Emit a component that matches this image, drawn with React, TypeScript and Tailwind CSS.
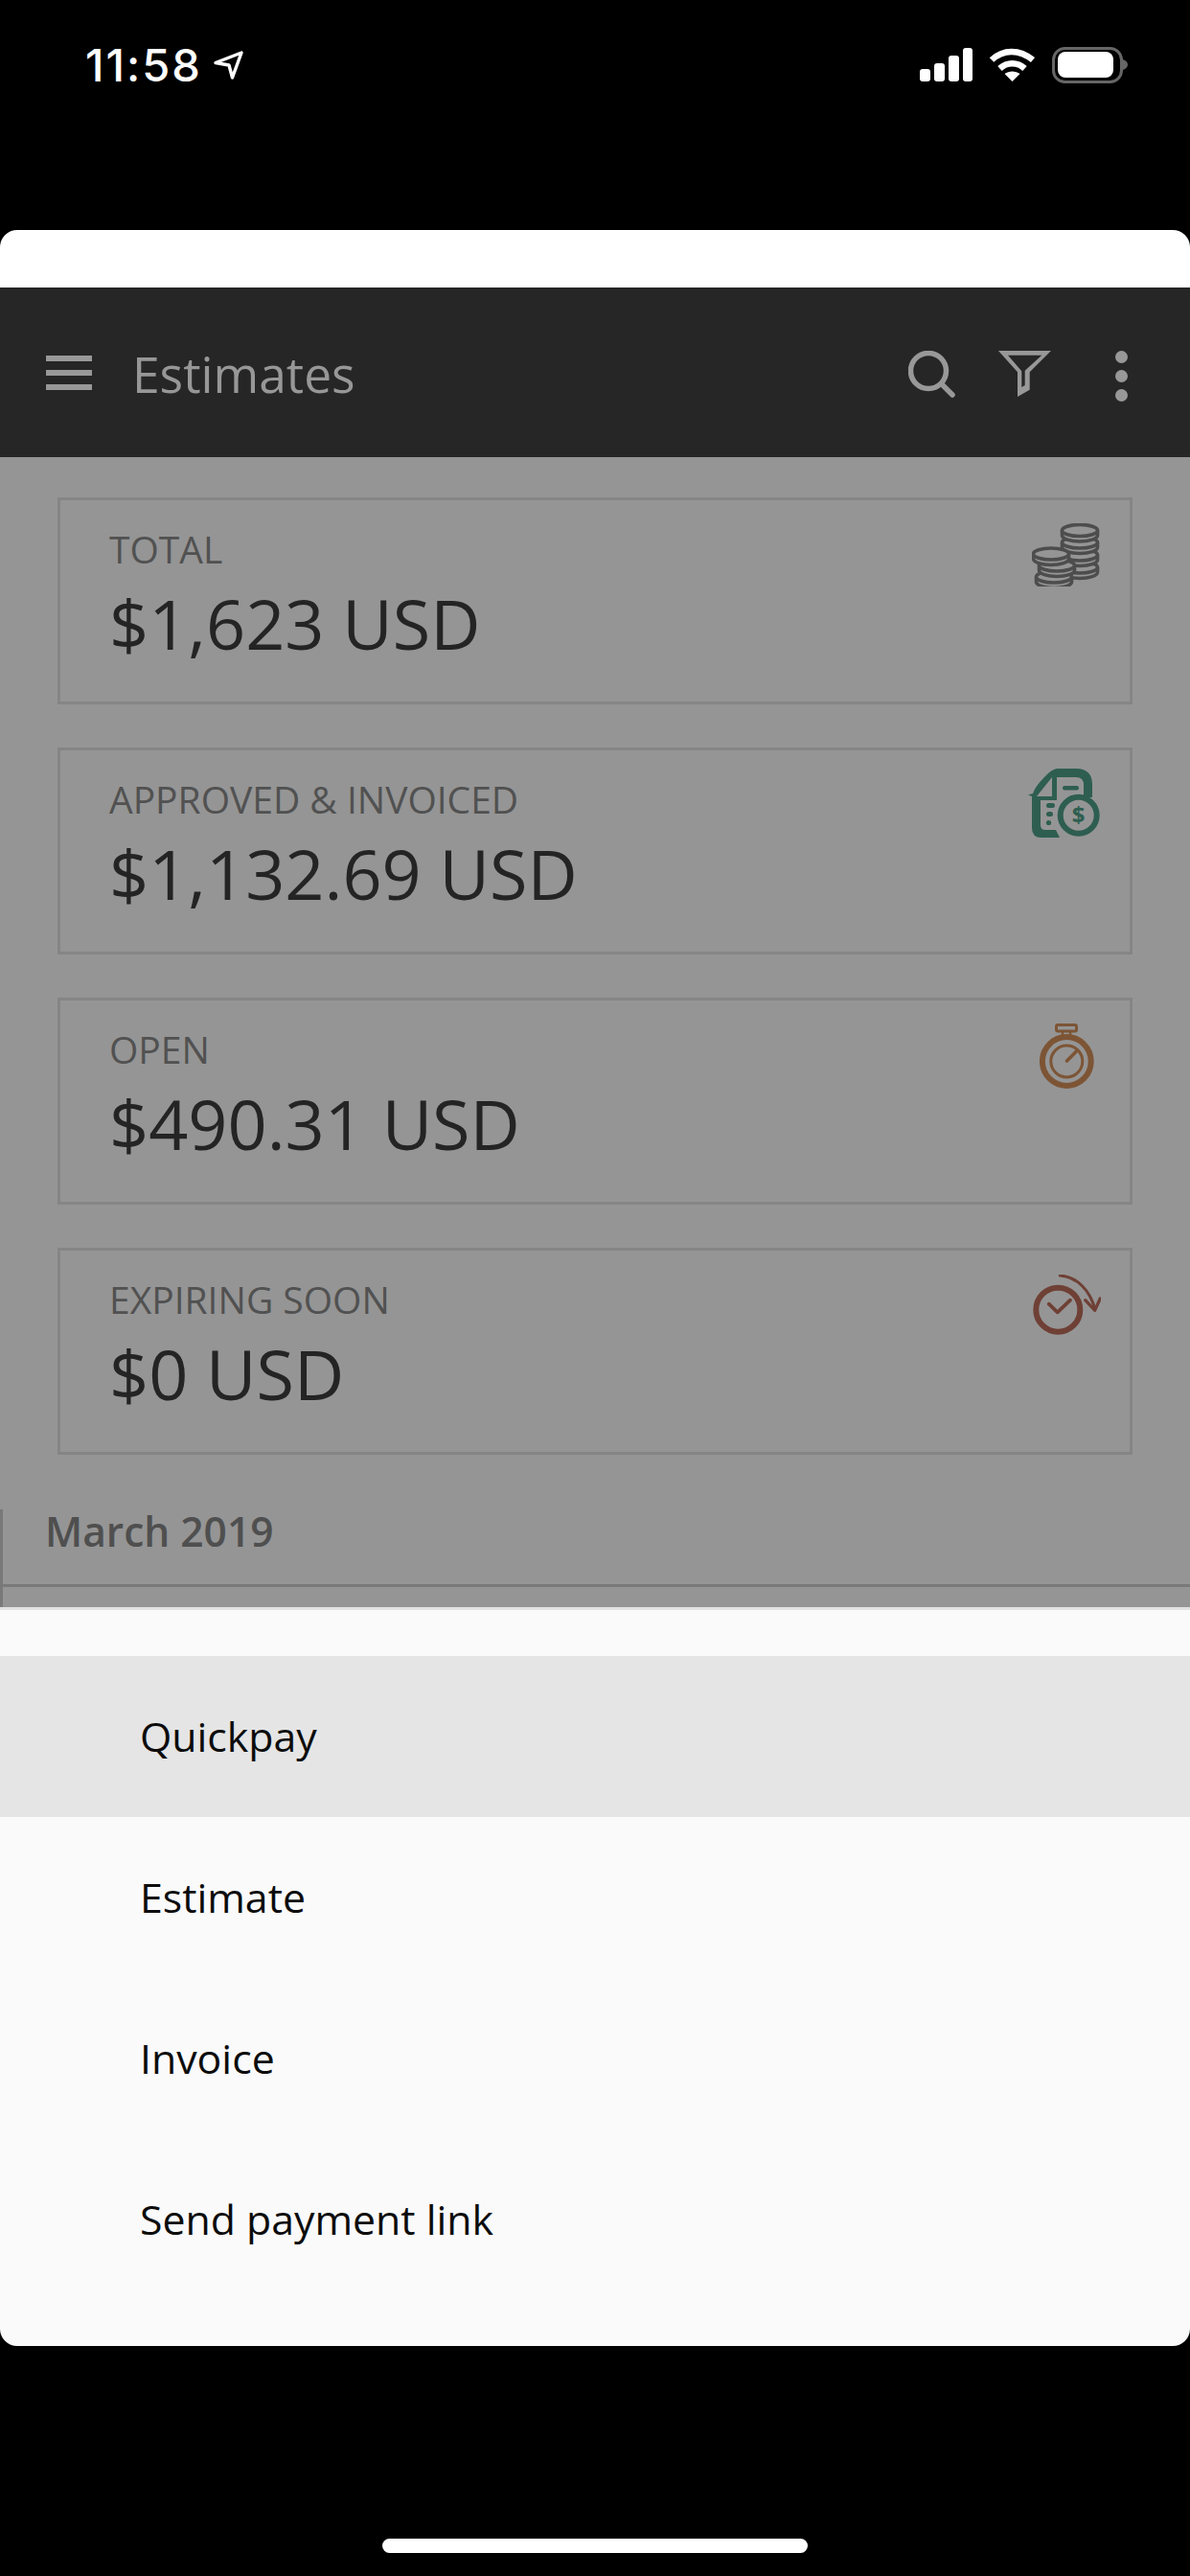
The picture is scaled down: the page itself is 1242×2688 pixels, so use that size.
import React from "react";

const font = { fontFamily: '"Open Sans", "Noto Sans", sans-serif' };

function Coins() {
  const coin = (cx: number, cy: number, k: number) => (
    <g key={k}>
      <path d={`M${cx - 18.5} ${cy}v5a18.5 6.5 0 0 0 37 0v-5`} fill="#959595" stroke="#4d4d4d" strokeWidth="3.6" />
      <ellipse cx={cx} cy={cy} rx="18.5" ry="6" fill="#959595" stroke="#4d4d4d" strokeWidth="3.6" />
    </g>
  );
  return (
    <svg width="71" height="66" viewBox="0 0 71 66" className="block">
      {coin(50, 46, 1)}
      {coin(50, 33, 2)}
      {coin(50, 20, 3)}
      {coin(50, 7.5, 4)}
      {coin(23, 56, 5)}
      {coin(26, 44, 6)}
      {coin(20, 32, 7)}
    </svg>
  );
}

function DocIcon() {
  const c = "#2e5e50";
  return (
    <svg width="75" height="72" viewBox="0 0 75 72" className="block">
      <path
        d="M33 72H14Q4 72 4 62V29L0 27.5L5 26Q7 19 17 9Q24 1 30 0H50Q67 0 67 17V30H58V17Q58 9 50 9H30V33H13V59Q13 64 18 64H29Z"
        fill={c}
      />
      <path d="M25 9V29H9Z" fill="#959595" />
      <rect x="36" y="18" width="17" height="4.5" rx="2.2" fill={c} />
      <rect x="19" y="36" width="9" height="5" rx="2.5" fill={c} />
      <rect x="19" y="45" width="7" height="5" rx="2.5" fill={c} />
      <circle cx="21.5" cy="56.5" r="2.6" fill={c} />
      <circle cx="52.7" cy="48.7" r="19" fill="#959595" stroke={c} strokeWidth="6" />
      <text x="52.7" y="57" textAnchor="middle" fontSize="24" fontWeight="700" fill={c} fontFamily="Open Sans, sans-serif">$</text>
    </svg>
  );
}

function Stopwatch() {
  const c = "#7d5535";
  return (
    <svg width="57" height="68" viewBox="0 0 57 68" fill="none" stroke={c} className="block">
      <rect x="17.5" y="1.5" width="21" height="6.5" rx="1.5" strokeWidth="3" />
      <path d="M24 8v4M32 8v4" strokeWidth="2.5" />
      <circle cx="28.3" cy="39.5" r="25.4" strokeWidth="6" />
      <circle cx="28.3" cy="39.5" r="16.5" strokeWidth="3" />
      <path d="M28.5 39L38 29.5" strokeWidth="3.6" strokeLinecap="round" />
    </svg>
  );
}

function Expiring() {
  const c = "#6f4035";
  return (
    <svg width="71" height="63" viewBox="0 0 71 63" fill="none" stroke={c} className="block">
      <circle cx="26.3" cy="36.7" r="23" strokeWidth="6" />
      <path d="M16.7 30.7L25.7 39.3L39 26.7" strokeWidth="3.8" strokeLinecap="round" strokeLinejoin="round" />
      <path d="M28.3 1C46 2 60 17 64.7 36" strokeWidth="3" strokeLinecap="round" />
      <path d="M54.7 26.7L64.7 37.3L70.2 25" strokeWidth="3.2" strokeLinecap="round" strokeLinejoin="round" />
    </svg>
  );
}

const cards = [
  { label: "TOTAL", value: "$1,623 USD", icon: <Coins />, pad: "pr-[31px] pt-[24px]" },
  { label: "APPROVED & INVOICED", value: "$1,132.69 USD", icon: <DocIcon />, pad: "pr-[31px] pt-[19px]" },
  { label: "OPEN", value: "$490.31 USD", icon: <Stopwatch />, pad: "pr-[37px] pt-[24px]" },
  { label: "EXPIRING SOON", value: "$0 USD", icon: <Expiring />, pad: "pr-[30px] pt-[25px]" },
];

const rows = ["Quickpay", "Estimate", "Invoice", "Send payment link"];

export default function App() {
  return (
    <div className="w-[1242px] h-[2688px] bg-black flex flex-col overflow-hidden" style={font}>
      <div className="h-[240px] shrink-0 flex items-start justify-between pl-[89px] pr-[65px] pt-[49px]">
        <div className="flex items-start gap-[12px] text-white">
          <span className="text-[47px] leading-[38px] font-medium tracking-[2px]" style={{ fontFamily: "Inter, sans-serif" }}>11:58</span>
          <svg width="31" height="30" viewBox="0 0 31 30" fill="none" className="mt-[4px]">
            <path d="M2 12.5L29 2L19.5 28L16 15Z" stroke="#fff" strokeWidth="3.4" strokeLinejoin="round" />
          </svg>
        </div>
        <svg width="217" height="38" viewBox="0 0 217 38" className="block">
          <g fill="#fff">
            <rect x="0" y="23" width="11" height="13" rx="3" />
            <rect x="15" y="17" width="11" height="19" rx="3" />
            <rect x="30" y="9" width="11" height="27" rx="3" />
            <rect x="45" y="1" width="10" height="35" rx="3" />
          </g>
          <g fill="none" stroke="#fff" strokeWidth="6.5">
            <path d="M75 13.5C87 2 104 2 118 13.5" />
            <path d="M83.5 22.5C91 15.5 102 15.5 109.5 22.5" />
          </g>
          <path d="M96.5 36L88.5 28C93 24.5 100 24.5 104.5 28Z" fill="#fff" />
          <rect x="139.5" y="1.5" width="71" height="35" rx="12" fill="none" stroke="#666" strokeWidth="3" />
          <rect x="144" y="5" width="58" height="27" rx="8" fill="#fff" />
          <path d="M212 13C215 14 217 16 217 18.5S215 23 212 24Z" fill="#666" />
        </svg>
      </div>

      <div className="h-[60px] shrink-0 bg-white rounded-t-[18px]" />

      <header className="h-[177px] shrink-0 bg-[#262627] flex items-center justify-between pl-[48px] pr-[65px]">
        <div className="flex items-center gap-[42px]">
          <div className="w-[48px] flex flex-col gap-[9px]">
            <div className="h-[6px] bg-[#989898]" />
            <div className="h-[6px] bg-[#989898]" />
            <div className="h-[6px] bg-[#989898]" />
          </div>
          <span className="text-[51.5px] leading-[60px] text-[#979797] mt-[2px]">Estimates</span>
        </div>
        <div className="flex items-center">
          <svg width="50" height="50" viewBox="0 0 50 50" fill="none" className="block mr-[44px] mt-[5px]">
            <circle cx="21" cy="21" r="18.5" stroke="#989898" strokeWidth="5.5" />
            <path d="M35 35L46 46" stroke="#989898" strokeWidth="5.5" strokeLinecap="round" />
          </svg>
          <svg width="55" height="48" viewBox="0 0 55 48" className="block mr-[67px] mt-[3px]">
            <path
              fillRule="evenodd"
              fill="#989898"
              d="M0 0H55L32.7 22.3V40.7L20 48V22.3ZM10 4.7H45.3L27.7 20.7V36L24.3 38V21.3Z"
            />
          </svg>
          <div className="flex flex-col gap-[7px] w-[13px] mt-[7px]">
            <div className="w-[13px] h-[13px] rounded-full bg-[#989898]" />
            <div className="w-[13px] h-[13px] rounded-full bg-[#989898]" />
            <div className="w-[13px] h-[13px] rounded-full bg-[#989898]" />
          </div>
        </div>
      </header>

      <main className="h-[1200px] shrink-0 bg-[#959595] pt-[42px] flex flex-col">
        <div className="px-[60px] flex flex-col gap-[45px]">
          {cards.map((c) => (
            <div key={c.label} className="h-[216px] border-[3px] border-[#858585] flex justify-between pl-[51px]">
              <div className="pt-[28px]">
                <div className="text-[39px] leading-[46px] text-[#515151]">{c.label}</div>
                <div className="text-[72px] leading-[84px] text-[#242424] mt-[12px]">{c.value}</div>
              </div>
              <div className={c.pad}>{c.icon}</div>
            </div>
          ))}
        </div>
        <div className="mt-[57px] h-[102px] border-l-[3px] border-[#797979]">
          <div className="h-[81px] border-b-[3px] border-[#797979] pl-[44px]">
            <div className="text-[42.5px] leading-[46px] font-semibold text-[#4f4f4f]">March 2019</div>
          </div>
        </div>
      </main>

      <section className="h-[771px] shrink-0 bg-[#fafafa] border-t-[3px] border-[#e2e2e2] rounded-b-[18px] pt-[48px]">
        {rows.map((r, i) => (
          <div key={r} className={`h-[168px] flex items-center pl-[146px] ${i === 0 ? "bg-[#e5e5e5]" : ""}`}>
            <span className="text-[42.8px] leading-[50px] text-[#0c0c0c]">{r}</span>
          </div>
        ))}
      </section>

      <div className="flex-1 flex justify-center pt-[201px]">
        <div className="w-[444px] h-[15px] rounded-[8px] bg-white" />
      </div>
    </div>
  );
}
